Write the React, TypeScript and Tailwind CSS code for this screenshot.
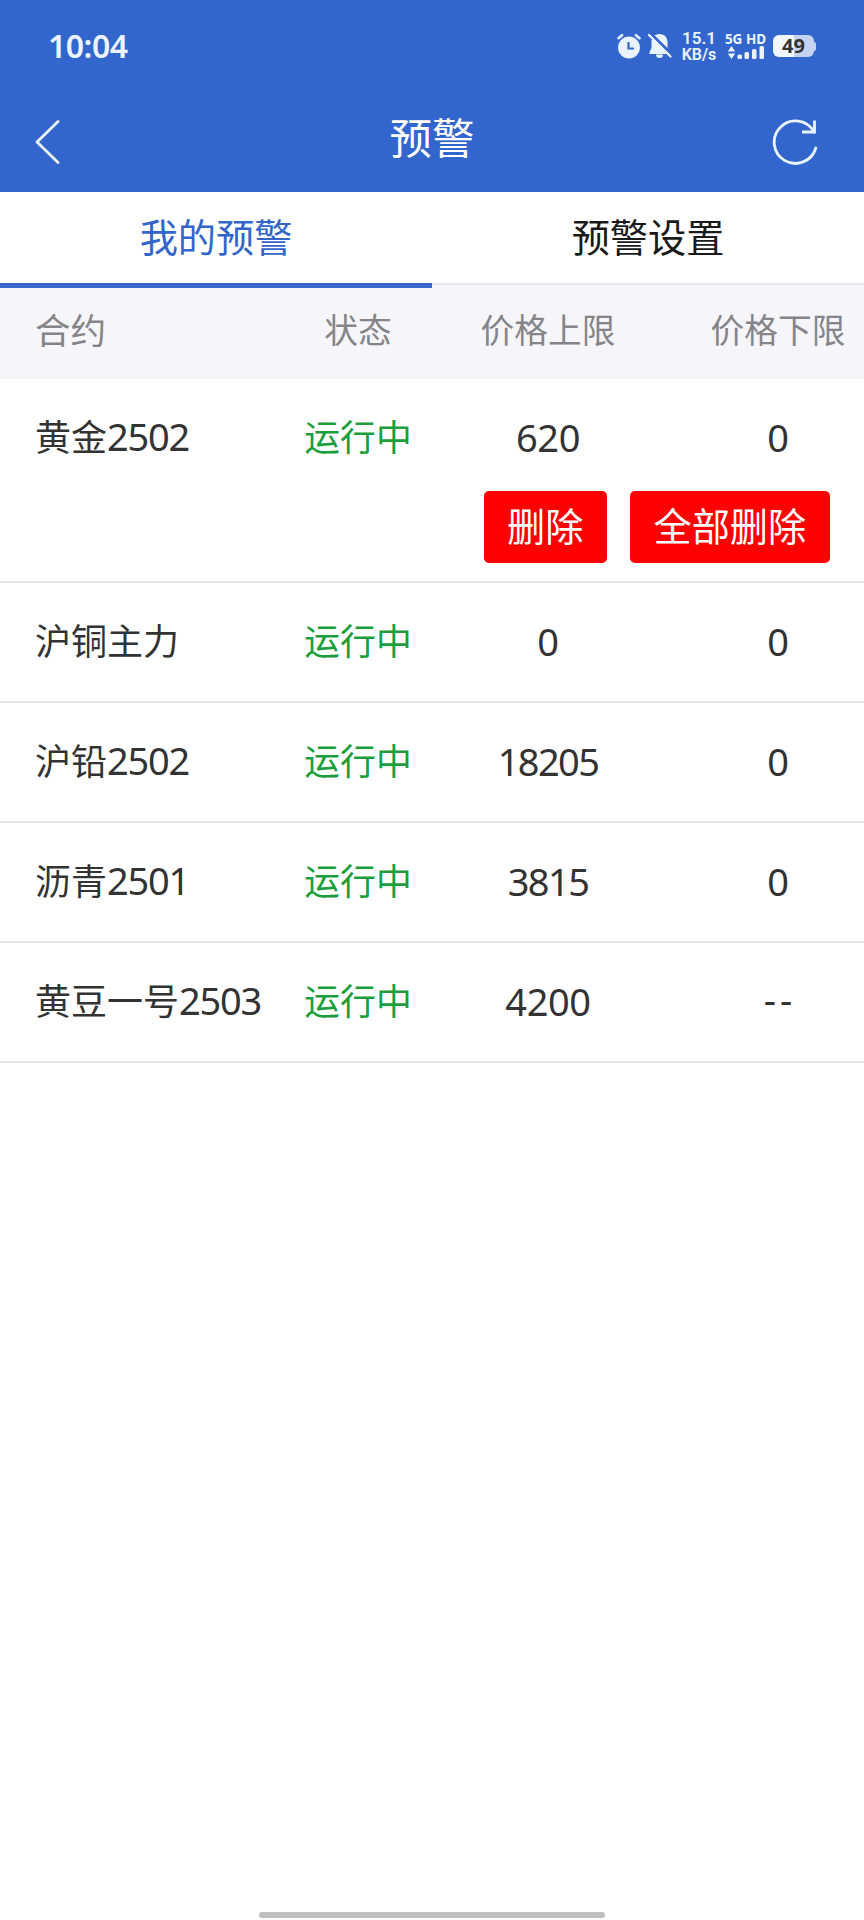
import { useState } from "react"

interface Alert {
  id: number;
  name: string;
  code?: string;
  status: string;
  upper: string;
  lower: string;
}

const alerts: Alert[] = [
  { id: 1, name: "黄金", code: "2502", status: "运行中", upper: "620", lower: "0" },
  { id: 2, name: "沪铜主力", status: "运行中", upper: "0", lower: "0" },
  { id: 3, name: "沪铅", code: "2502", status: "运行中", upper: "18205", lower: "0" },
  { id: 4, name: "沥青", code: "2501", status: "运行中", upper: "3815", lower: "0" },
  { id: 5, name: "黄豆一号", code: "2503", status: "运行中", upper: "4200", lower: "--" },
];

const tabs = ["我的预警", "预警设置"];

const StatusBar = () => (
  <div className="flex h-[92px] items-center pl-12 pr-12 text-[#eaf4ff]">
    <span className="pb-px text-[32px] leading-none font-semibold tracking-[-0.5px]">10:04</span>

    <div className="ml-auto flex items-center">
      {/*Alarm*/}
      <svg width="24" height="26" viewBox="0 0 24 26" fill="none" stroke="currentColor" strokeLinecap="round">
        <circle cx="12" cy="14.5" r="10.9" fill="currentColor" stroke="none" />
        <path d="M1.500 5.200 5 2.200M22.500 5.200 19 2.200" strokeWidth="2.600" />
        <path d="M11.500 9v6.500h5.500" stroke="#3366cc" strokeWidth="2.200" strokeLinecap="butt" />
      </svg>
      {/*Muted bell*/}
      <svg className="ml-[7px]" width="24" height="26" viewBox="0 0 24 26" fill="none">
        <path d="M11.500 1C6.500 1 3.500 4.600 3.500 9v6L1.500 19v2h20v-2l-2-4V9c0-4.400-3-8-8-8Z" fill="#eaf4ff" />
        <path d="M8 21.500h7a3.500 3.500 0 0 1-7 0Z" fill="#eaf4ff" />
        <path d="M2.500 .5 25 22.500" stroke="#3366cc" strokeWidth="3" />
        <path d="M1 2 22.500 23.500" stroke="#eaf4ff" strokeWidth="2.200" strokeLinecap="round" />
      </svg>
      {/*Network speed*/}
      <div className="ml-[9px] flex w-9 flex-col items-center font-[Roboto,sans-serif] leading-[15px] font-semibold whitespace-nowrap">
        <span className="text-[17px]">15.1</span>
        <span className="pt-px text-[16px]">KB/s</span>
      </div>
      {/*Signal*/}
      <div className="ml-[9px] flex w-[39px] flex-col items-center">
        <span className="text-[13.500px] leading-[13px] font-bold whitespace-nowrap">5G HD</span>
        <svg width="38" height="14" viewBox="0 0 38 14" fill="currentColor">
          <path d="M4.500 0 8.200 5.500H.8ZM4.500 13 8.200 7.500H.8Z" />
          <rect x="10.500" y="8.500" width="4.500" height="4.500" rx="1.500" />
          <rect x="17.500" y="6" width="4.500" height="7" rx="1.500" />
          <rect x="25" y="3" width="4.500" height="10" rx="1.500" />
          <rect x="32.500" y="0" width="4.500" height="13" rx="1.500" />
        </svg>
      </div>
      {/*Battery*/}
      <div className="ml-2 flex items-center">
        <div className="flex h-[22px] w-[41px] items-center justify-center rounded-[6px] bg-linear-to-r from-[#f2f8ff] from-50% to-[#c5d3f0] to-50% text-[20px] leading-none font-bold text-[#333]">
          49
        </div>
        <div className="h-[9px] w-[2px] rounded-r-sm bg-[#c5d3f0]" />
      </div>
    </div>
  </div>
);

const App = () => {
  const [activeTab, setActiveTab] = useState(0);
  const [selectedId, setSelectedId] = useState(1);

  return (
    <div className="flex h-[1920px] w-[864px] flex-col bg-white font-['Noto_Sans','Noto_Sans_CJK_SC',sans-serif] text-[#333]">
      {/*Header*/}
      <header className="h-48 bg-[#3366cc] text-white">
        <StatusBar />
        <div className="flex h-[100px] items-center justify-between pr-[46px] pl-[35px]">
          <button aria-label="返回" className="w-[57px]">
            <svg width="26" height="44" viewBox="0 0 26 44" fill="none" stroke="#eaf4ff" strokeWidth="2.800" strokeLinecap="round" strokeLinejoin="round">
              <path d="M23 1.500 2 22l21 20.500" />
            </svg>
          </button>
          <h1 className="pb-2 text-[42.500px] leading-none">预警</h1>
          <button aria-label="刷新">
            <svg width="46" height="46" viewBox="0 0 46 46" fill="none" stroke="#eaf4ff" strokeWidth="2.800">
              <path d="M43.800 29A21.200 21.200 0 1 1 42 13" strokeLinecap="round" />
              <path d="M42.500 1.500v11.500H30" />
            </svg>
          </button>
        </div>
      </header>

      {/*Tabs*/}
      <nav className="flex h-[93px] border-b-2 border-[#e4e5ed]">
        {tabs.map((tab, i) => (
          <button
            key={tab}
            onClick={() => setActiveTab(i)}
            className={`relative flex-1 pb-px text-[38.200px] leading-none ${i === activeTab ? "text-[#3366cc]" : "text-[#1a1a1a]"}`}
          >
            {tab}
            {i === activeTab && <span className="absolute top-[91px] left-0 h-[5px] w-full bg-[#3765c8]" />}
          </button>
        ))}
      </nav>

      {/*Column titles*/}
      <div className="grid h-[94px] grid-cols-[300px_116px_264px_184px] items-center bg-[#f6f6fa] pb-[2px] text-center text-[33.700px] leading-none text-[#858589]">
        <span className="pl-[35px] text-left text-[35.500px]">合约</span>
        <span>状态</span>
        <span>价格上限</span>
        <span className="pl-3 whitespace-nowrap">价格下限</span>
      </div>

      {/*Alert list*/}
      <ul>
        {alerts.map((a) => (
          <li key={a.id} onClick={() => setSelectedId(a.id)} className="border-b-2 border-[#e4e5ea]">
            <div className="grid h-[118px] grid-cols-[300px_116px_264px_184px] items-center text-center text-[38px] leading-none">
              <span className="pb-[3px] pl-[35px] text-left text-[36px] whitespace-nowrap">
                {a.name}
                <span className="text-[38px] tracking-[-1.2px]">{a.code}</span>
              </span>
              <span className="pb-px text-[35.800px] text-[#1a9f3c]">{a.status}</span>
              <span className={`pb-[3px] ${a.upper.includes("1") ? "tracking-[-1.6px]" : "tracking-[-0.4px]"}`}>{a.upper}</span>
              <span className={a.lower === "--" ? "pb-[7px] pl-[16px] tracking-[4px]" : "pb-[3px] pl-3"}>{a.lower}</span>
            </div>
            {a.id === selectedId && (
              <div className="-mt-1.5 flex h-[90px] justify-end gap-[23px] pr-[34px] text-[38.200px] leading-none text-white">
                <button className="h-[72px] rounded-[5px] bg-[#ff0000] px-[23.200px] pb-[2px]">删除</button>
                <button className="h-[72px] rounded-[5px] bg-[#ff0000] px-[23.800px] pb-[2px]">全部删除</button>
              </div>
            )}
          </li>
        ))}
      </ul>

      {/*Gesture bar*/}
      <div className="mx-auto mt-auto mb-[2px] h-[6px] w-[346px] rounded-full bg-[#c0c0c0]" />
    </div>
  );
};

export default App
